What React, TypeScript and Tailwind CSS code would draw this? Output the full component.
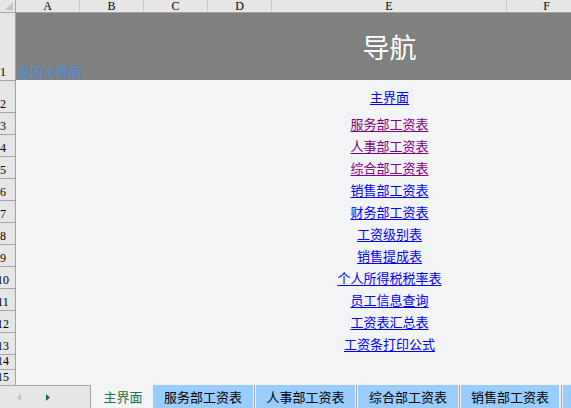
import React from 'react';

const font = { fontFamily: '"Noto Sans CJK SC", "Liberation Sans", sans-serif' };

const links: { label: string; visited?: boolean }[] = [
  { label: '服务部工资表', visited: true },
  { label: '人事部工资表', visited: true },
  { label: '综合部工资表', visited: true },
  { label: '销售部工资表' },
  { label: '财务部工资表' },
  { label: '工资级别表' },
  { label: '销售提成表' },
  { label: '个人所得税税率表' },
  { label: '员工信息查询' },
  { label: '工资表汇总表' },
  { label: '工资条打印公式' },
];

const cols = [
  { name: 'A', w: 'w-[64px]' },
  { name: 'B', w: 'w-[64px]' },
  { name: 'C', w: 'w-[64px]' },
  { name: 'D', w: 'w-[64px]' },
  { name: 'E', w: 'w-[235px]' },
  { name: 'F', w: 'w-[80px]' },
];

function RowHead({ n, h }: { n: number; h: string }) {
  return (
    <div className={`${h} w-[16px] shrink-0 bg-[#e6e6e6] border-r border-b border-[#a3a3a3] overflow-hidden flex items-end`}>
      <div className="w-[30px] -ml-[12px] shrink-0 flex justify-center pb-[1px] text-[12px] leading-[13px] text-black font-['Liberation_Serif',serif]">
        {n}
      </div>
    </div>
  );
}

function LinkRow({ n, h, label, visited }: { n: number; h: string; label: string; visited?: boolean }) {
  return (
    <div className="flex">
      <RowHead n={n} h={h} />
      <div className="w-[256px] shrink-0" />
      <div className={`w-[235px] shrink-0 flex items-center justify-center ${h}`}>
        <span
          style={font}
          className={`text-[13px] leading-[14px] underline underline-offset-[2px] ${visited ? 'text-[#800080]' : 'text-[#0000ff]'}`}
        >
          {label}
        </span>
      </div>
    </div>
  );
}

export default function App() {
  return (
    <div className="w-[571px] h-[408px] overflow-hidden bg-[#f3f4f6] flex flex-col">
      <div className="h-[385px] overflow-hidden flex flex-col">
        {/* column headers */}
        <div className="flex h-[13px] shrink-0 bg-[#e6e6e6] border-b border-[#a3a3a3]">
          <div className="w-[16px] shrink-0 border-r border-[#a3a3a3] relative overflow-hidden">
            <svg width="16" height="12" className="absolute left-0 top-0">
              <polygon points="13,2 13,10 5,10" fill="#c4c4c4" />
            </svg>
          </div>
          {cols.map((c) => (
            <div
              key={c.name}
              className={`${c.w} shrink-0 border-r border-[#c8c8c8] flex items-center justify-center text-[12px] leading-[12px] text-black font-['Liberation_Serif',serif]`}
            >
              {c.name}
            </div>
          ))}
        </div>

        {/* row 1 */}
        <div className="flex">
          <RowHead n={1} h="h-[68px]" />
          <div className="flex-1 h-[67px] bg-[#808080] flex relative">
            <div className="w-[256px] shrink-0 flex items-end">
              <span style={font} className="text-[13px] leading-[14px] text-[#4a8fe3] pl-[1px] pb-[1px] whitespace-nowrap">
                返回主界面
              </span>
            </div>
            <div className="w-[235px] shrink-0 flex items-center justify-center">
              <span style={font} className="text-[27px] leading-[30px] text-white">
                导航
              </span>
            </div>
          </div>
        </div>

        {/* row 2 */}
        <LinkRow n={2} h="h-[32px]" label="主界面" />

        {links.map((l, i) => (
          <LinkRow key={l.label} n={i + 3} h="h-[22px]" label={l.label} visited={l.visited} />
        ))}

        <div className="flex">
          <RowHead n={14} h="h-[15px]" />
        </div>
        <div className="flex">
          <RowHead n={15} h="h-[16px]" />
        </div>
      </div>

      {/* sheet tabs */}
      <div className="h-[23px] flex shrink-0" style={font}>
        <div className="w-[91px] shrink-0 bg-[#e6e6e6] border-t border-r border-[#a3a3a3] flex items-center">
          <svg width="91" height="22">
            <polygon points="21,8 21,15 17,11.5" fill="#c2c2c2" />
            <polygon points="46,8 46,15 50,11.5" fill="#1e6b3a" />
          </svg>
        </div>
        <div className="w-[62px] shrink-0 flex items-center justify-center text-[13px] text-[#217346] pl-[2px]">
          主界面
        </div>
        <div className="w-[100px] shrink-0 bg-[#99ccff] flex items-center justify-center text-[13px] text-black">
          服务部工资表
        </div>
        <div className="w-[3px] shrink-0 flex justify-center"><div className="w-px bg-[#a3a3a3]" /></div>
        <div className="w-[99px] shrink-0 bg-[#99ccff] flex items-center justify-center text-[13px] text-black">
          人事部工资表
        </div>
        <div className="w-[3px] shrink-0 flex justify-center"><div className="w-px bg-[#a3a3a3]" /></div>
        <div className="w-[100px] shrink-0 bg-[#99ccff] flex items-center justify-center text-[13px] text-black">
          综合部工资表
        </div>
        <div className="w-[3px] shrink-0 flex justify-center"><div className="w-px bg-[#a3a3a3]" /></div>
        <div className="w-[98px] shrink-0 bg-[#99ccff] flex items-center justify-center text-[13px] text-black">
          销售部工资表
        </div>
        <div className="w-[4px] shrink-0 flex justify-center"><div className="w-px bg-[#a3a3a3]" /></div>
        <div className="flex-1 bg-[#99ccff]" />
      </div>
    </div>
  );
}
